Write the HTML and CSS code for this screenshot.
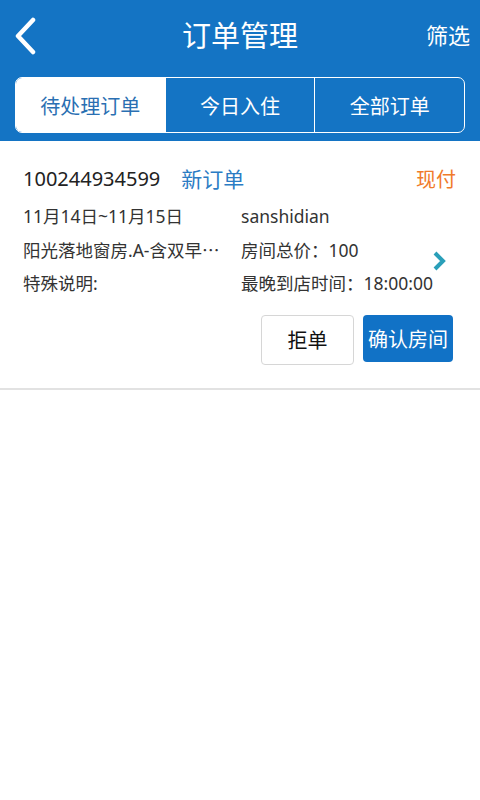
FILE: index.html
```html
<!DOCTYPE html>
<html><head>
<meta charset="utf-8">
<title>订单管理</title>
<link rel="stylesheet" href="styles.css">
</head>
<body>

<header class="top">
	<div class="bar">
		<a class="back" href="#"><svg width="24" height="38" viewBox="0 0 24 38"><path d="M20 3 L5 19 L20 35" fill="none" stroke="#fff" stroke-width="4.5" stroke-linecap="round" stroke-linejoin="round"/></svg></a>
		<h1>订单管理</h1>
		<a class="filter" href="#">筛选</a>
	</div>
	<nav class="tabs">
		<a class="tab on" href="#">待处理订单</a>
		<a class="tab" href="#">今日入住</a>
		<a class="tab" href="#">全部订单</a>
	</nav>
</header>

<div class="order">
	<div class="head">
		<span class="num">100244934599</span>
		<span class="state">新订单</span>
		<span class="pay">现付</span>
	</div>
	<dl class="info">
		<dt>11月14日~11月15日</dt>
		<dd>sanshidian</dd>
		<dt>阳光落地窗房.A-含双早<span class="cjk">…</span></dt>
		<dd>房间总价：100</dd>
		<dt>特殊说明:</dt>
		<dd>最晚到店时间：18:00:00</dd>
	</dl>
	<div class="actions">
		<a class="btn" href="#">拒单</a>
		<a class="btn ok" href="#">确认房间</a>
	</div>
	<svg class="more" width="16" height="22" viewBox="0 0 16 22"><path d="M3 3 L11 11 L3 19" fill="none" stroke="#2a9fb9" stroke-width="4"/></svg>
</div>

</body></html>
```

FILE: styles.css
```css
body {
	margin: 0;
	background: #fff;
	font-family: "Noto Sans", "Noto Sans CJK SC", sans-serif;
	color: #333;
}

a {
	text-decoration: none;
	color: inherit;
}

.cjk {
	font-family: "Noto Sans CJK SC", sans-serif;
}

.top {
	background: #1474c4;
	padding: 0 15px 8px;
	color: #fff;
}

	.bar {
		height: 77px;
		display: grid;
		grid-template-columns: 1fr auto 1fr;
		align-items: center;
		padding-bottom: 10px;
		box-sizing: border-box;
	}

		.back {
			display: flex;
			margin-left: -2px;
			margin-top: 4px;
		}

		.bar h1 {
			margin: 0;
			font-size: 29px;
			font-weight: normal;
		}

		.filter {
			justify-self: end;
			font-size: 22px;
			margin-right: -5px;
		}

	.tabs {
		display: flex;
		height: 56px;
		border: 1.5px solid #fff;
		border-radius: 7px;
		overflow: hidden;
		box-sizing: border-box;
	}

		.tab {
			flex: 1;
			display: flex;
			align-items: center;
			justify-content: center;
			font-size: 20px;
			border-left: 1.5px solid #fff;
		}

		.tab:first-child {
			border-left: 0;
		}

		.tab.on {
			background: #fff;
			color: #2a6fb2;
		}

.order {
	position: relative;
	padding: 22px 27px 23px 23px;
	border-bottom: 2px solid #e2e2e2;
}

	.head {
		display: flex;
		align-items: center;
		height: 30px;
		font-size: 20px;
	}

		.num {
			color: #222;
			margin-right: 21px;
		}

		.state {
			color: #2b7cc4;
			flex: 1;
			font-size: 21px;
		}

		.pay {
			color: #f07a2a;
			margin-right: -3px;
		}

	.info {
		margin: 6px 0 0;
		display: grid;
		grid-template-columns: 218px auto;
		grid-auto-rows: 33.5px;
		align-items: center;
		font-size: 17.5px;
		color: #333;
	}

		.info dt, .info dd {
			margin: 0;
			white-space: nowrap;
		}

	.actions {
		display: flex;
		justify-content: flex-end;
		align-items: flex-start;
		gap: 9px;
		margin-top: 15px;
	}

		.btn {
			display: flex;
			align-items: center;
			justify-content: center;
			width: 93px;
			height: 50px;
			box-sizing: border-box;
			border: 1px solid #d6d6d6;
			border-radius: 4px;
			font-size: 20px;
			color: #111;
		}

		.btn.ok {
			width: 90px;
			height: 47px;
			border: 0;
			background: #1172c6;
			color: #fff;
		}

	.more {
		position: absolute;
		right: 32px;
		top: 50%;
		margin-top: -14px;
	}
```
